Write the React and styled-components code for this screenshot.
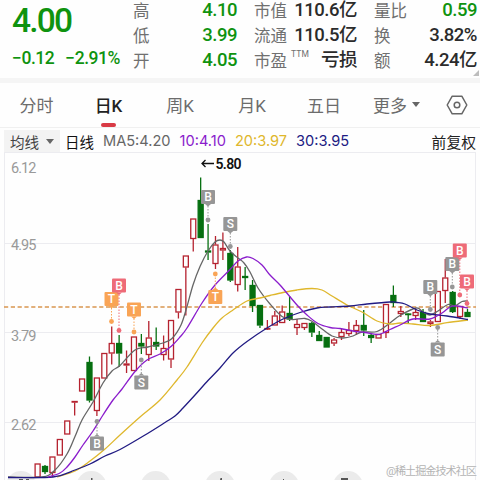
import styled, { createGlobalStyle } from "styled-components";

const GlobalStyle = createGlobalStyle`
  * {
    box-sizing: border-box;
  }
  body {
    margin: 0;
    background: #fefefe;
    overflow: hidden;
  }
`;

const GREEN = "#0f930f";
const RED = "#b5222f";
const DARK_GREEN = "#066f10";
const GREY = "#969696";
const PINK = "#ee6b78";
const ORANGE = "#f9a455";

const Page = styled.div`
  width: 480px;
  height: 480px;
  overflow: hidden;
  display: flex;
  flex-direction: column;
  font-family: Roboto, "Noto Sans CJK SC", sans-serif;
  color: #2b2b2b;
`;

const Quote = styled.div`
  height: 83px;
  flex: none;
  display: flex;
  position: relative;
  border-bottom: 5px solid #f5f5f5;
`;

const Price = styled.div`
  width: 133px;
  padding-left: 12px;
  color: ${GREEN};
`;

const PriceNow = styled.div`
  font-size: 33.5px;
  font-weight: 500;
  line-height: 39px;
  letter-spacing: -1.8px;
  padding-top: 1px;
`;

const PriceChange = styled.div`
  display: flex;
  gap: 11px;
  font-size: 17.5px;
  font-weight: 500;
  line-height: 20px;
  letter-spacing: -0.45px;
  margin-top: 8px;
  white-space: nowrap;
`;

const Stats = styled.div`
  display: grid;
  grid-template-columns: 104px 103px 103px;
  grid-auto-rows: 25px;
  column-gap: 17px;
  margin-top: -2px;
`;

const Stat = styled.div`
  display: flex;
  align-items: center;
  justify-content: space-between;
  white-space: nowrap;
`;

const StatLabel = styled.span`
  display: flex;
  font-size: 16.5px;
  line-height: 25px;
  padding-top: 1px;
  color: #707070;
`;

const Ttm = styled.span`
  font-size: 8.5px;
  line-height: 10px;
  letter-spacing: 0.2px;
  margin-left: 4px;
`;

const StatValue = styled.span`
  font-size: 18.5px;
  font-weight: 500;
  line-height: 25px;
  letter-spacing: -0.5px;
  color: ${(props) => (props.$down ? GREEN : "#2b2b2b")};
`;

const Corner = styled.div`
  position: absolute;
  right: 1px;
  bottom: 2px;
  border-left: 6px solid transparent;
  border-bottom: 6px solid #bdbdbd;
`;

const Tabs = styled.div`
  height: 45px;
  flex: none;
  display: grid;
  grid-template-columns: 73px 71px 72px 72px 72px 73px 47px;
  border-bottom: 1px solid #f0f0f0;
`;

const Tab = styled.div`
  display: flex;
  flex-direction: column;
  align-items: center;
  justify-content: space-between;
  font-size: 17px;
  padding-top: 3px;
  font-weight: ${(props) => (props.$active ? 500 : 400)};
  color: ${(props) => (props.$active ? "#222" : "#6c6c6c")};
`;

const TabText = styled.span`
  display: flex;
  align-items: center;
  gap: 5px;
  height: 37px;
`;

const Underline = styled.div`
  width: 15px;
  height: 4px;
  border-radius: 2px;
  background: #d93a45;
`;

const Caret = styled.i`
  border: 4px solid transparent;
  border-top: 5px solid #666;
  border-bottom: 0;
`;

const Legend = styled.div`
  height: 24px;
  flex: none;
  display: flex;
  align-items: center;
  padding: 2px 4px 0;
  font-family: Inter, "Noto Sans CJK SC", sans-serif;
  font-size: 14.6px;
  white-space: nowrap;
`;

const Picker = styled.div`
  width: 56px;
  height: 22px;
  padding: 0 6px;
  display: flex;
  align-items: center;
  justify-content: space-between;
  background: #f3f3f3;
  color: #444;
`;

const Period = styled.span`
  margin-left: 5px;
  color: #111;
  font-size: 14.5px;
`;

const Average = styled.span`
  margin-left: 9px;
  color: ${(props) => props.color};
`;

const Adjust = styled.span`
  margin-left: auto;
  color: #222;
  font-size: 14.8px;
`;

const Chart = styled.svg`
  display: block;
  flex: none;
  font-family: Roboto, "Noto Sans CJK SC", sans-serif;
`;

const stats = [
  { label: "高", value: "4.10", down: true },
  { label: "市值", value: "110.6亿" },
  { label: "量比", value: "0.59", down: true },
  { label: "低", value: "3.99", down: true },
  { label: "流通", value: "110.5亿" },
  { label: "换", value: "3.82%" },
  { label: "开", value: "4.05", down: true },
  { label: "市盈", value: "亏损", ttm: true },
  { label: "额", value: "4.24亿" },
];

const tabs = ["分时", "日K", "周K", "月K", "五日"];

// [up, high, body top, body bottom, low]
const candles = [
  [1, 463.5, 463.5, 477.5, 478],
  [0, 465, 466, 472, 474],
  [1, 456.5, 456.5, 473, 477],
  [1, 439, 439, 455.5, 455.5],
  [1, 420.5, 420.5, 434.5, 434.5],
  [1, 401, 401, 402.5, 415.5],
  [1, 378.5, 378.5, 391.5, 391.5],
  [0, 356.5, 362, 400.5, 402.5],
  [1, 377.5, 377.5, 411, 416],
  [1, 353, 353, 378.5, 378.5],
  [1, 326.5, 343, 353.5, 364.5],
  [0, 335, 343, 353.5, 367],
  [1, 350.5, 363.5, 365.5, 373],
  [1, 336.5, 336.5, 371, 371],
  [0, 334, 343, 346.5, 354],
  [1, 321, 337.5, 355, 361],
  [0, 327.5, 342, 346.5, 350],
  [1, 335.5, 348, 355, 360.5],
  [1, 320, 320, 359.5, 368],
  [1, 289, 289, 312.5, 318.5],
  [1, 255.5, 255.5, 267.5, 315.5],
  [1, 218.5, 218.5, 239, 251.5],
  [0, 177.5, 200, 238, 238],
  [0, 224, 250.5, 252.5, 260],
  [1, 236, 244.5, 264, 269],
  [1, 232.5, 248, 250.5, 260],
  [0, 250, 253, 280.5, 282],
  [1, 247, 266.5, 285, 291.5],
  [0, 267, 276, 278, 290],
  [0, 280, 285, 306, 312],
  [0, 305, 305, 325.5, 328],
  [1, 320, 328, 329, 330],
  [1, 311, 315.5, 325.5, 325.5],
  [1, 305.5, 311.5, 323, 323],
  [0, 296, 313, 319.5, 321],
  [1, 319, 324, 328, 335],
  [1, 323, 323, 328, 330],
  [0, 322, 323, 332.5, 337],
  [0, 331, 335, 341, 341],
  [0, 337, 337, 347.5, 347.5],
  [1, 338, 339.5, 343.5, 346],
  [1, 328.5, 332, 337, 340],
  [1, 322, 330, 334, 336],
  [1, 320, 325, 331, 335],
  [0, 310, 325, 330.5, 336],
  [0, 334, 335, 338, 343],
  [1, 334, 334, 338.5, 338.5],
  [1, 304, 304, 333, 338],
  [0, 285.5, 295, 303, 307],
  [1, 306, 311, 314, 317],
  [0, 313, 313.5, 314.5, 323],
  [1, 308, 312, 316, 320],
  [0, 309, 312, 322, 322],
  [1, 320, 321.5, 324, 327],
  [1, 291, 291, 322, 322],
  [1, 259, 277.5, 291, 303],
  [0, 291, 292, 312, 313],
  [1, 306, 306, 317, 319],
  [0, 309, 312, 317, 317],
];

const averages = [
  {
    color: "#666",
    points: [[8, 477], [42, 477], [55, 470], [67, 454], [75, 436.5], [82, 420], [93, 402], [103, 383], [112, 371], [120, 365.5], [135, 350], [148, 347], [163, 343], [172, 338.5], [181, 325], [187, 306.5], [193, 285], [200, 266.5], [208, 251], [215, 242], [220, 240], [224, 242], [230, 251], [238, 258], [244, 263], [250, 272], [258, 288], [270, 304], [282, 316.5], [292, 319.5], [305, 318.5], [313, 322], [322, 329], [332, 336], [343, 338], [353, 336], [362, 332], [377, 331.5], [390, 323], [400, 315.5], [416, 308], [423, 312], [430, 315], [438, 311], [448, 304.5], [455, 306], [462, 301.5], [468, 301]],
  },
  {
    color: "#dfb72c",
    points: [[57, 477], [75, 471], [90, 461], [105, 449], [120, 435], [140, 417], [160, 400], [177, 380], [187, 367], [202, 343], [213, 328], [222, 318], [233, 310], [247, 301], [260, 298], [270, 295.5], [283, 292.5], [297, 290], [312, 288.5], [322, 290], [332, 296], [347, 305], [362, 312], [377, 321], [390, 324], [400, 323], [413, 324], [430, 325.5], [447, 322.7], [468, 320]],
  },
  {
    color: "#211b83",
    points: [[8, 477.5], [53, 477], [75, 470], [90, 464], [105, 456], [120, 449.5], [145, 435], [165, 422.5], [175, 416], [183, 408], [195, 395], [208, 380.5], [220, 368], [233, 353], [247, 341.5], [267, 328], [283, 319], [300, 312.5], [317, 308], [330, 307], [350, 306], [367, 304], [390, 302], [397, 302.5], [405, 304], [417, 310], [430, 314], [447, 316], [468, 319.5]],
  },
  {
    color: "#8a1ccc",
    points: [[48, 477], [60, 473], [67, 467], [75, 457], [83, 445], [93, 431], [103, 415], [113, 400], [122, 389], [135, 371.5], [147, 360], [160, 354], [171, 346.5], [180, 337], [187, 328], [202, 303], [215, 285], [230, 269.5], [238, 261], [246.5, 257], [253, 258.5], [262, 265], [270, 275], [280, 285], [297, 305], [307, 315], [318, 323.5], [330, 327.5], [340, 328.5], [353, 331], [365, 332.5], [377, 334.5], [383, 333], [390, 329.5], [400, 325], [413, 319], [430, 319], [442, 313], [450, 307], [457, 306], [468, 308]],
  },
];

const markers = [
  { text: "T", color: ORANGE, x: 111.5, y: 299, dot: 321.5 },
  { text: "B", color: PINK, x: 119, y: 285.5, dot: 330.5 },
  { text: "T", color: ORANGE, x: 134, y: 309.5, dot: 332 },
  { text: "S", color: GREY, x: 141.3, y: 382.5, dot: 360 },
  { text: "B", color: GREY, x: 97, y: 443.5, dot: 421.5 },
  { text: "B", color: GREY, x: 208, y: 197, dot: 220 },
  { text: "S", color: GREY, x: 230.3, y: 224, dot: 246.5 },
  { text: "T", color: ORANGE, x: 215.3, y: 297, dot: 274 },
  { text: "B", color: GREY, x: 430.3, y: 287, dot: 309.5 },
  { text: "B", color: GREY, x: 452.3, y: 264, dot: 287 },
  { text: "B", color: PINK, x: 459.8, y: 250.5, dot: 295 },
  { text: "B", color: PINK, x: 467, y: 281.5, dot: 303.5 },
  { text: "S", color: GREY, x: 437.7, y: 349.5, dot: 327.5 },
];

const axis = [
  ["6.12", 173],
  ["4.95", 250],
  ["3.79", 340.5],
  ["2.62", 429.5],
];

const smooth = (p) => {
  let d = `M${p[0][0]} ${p[0][1]}`;
  for (let i = 0; i < p.length - 1; i++) {
    const a = p[i - 1] || p[i];
    const b = p[i];
    const c = p[i + 1];
    const e = p[i + 2] || c;
    d += `C${b[0] + (c[0] - a[0]) / 6} ${b[1] + (c[1] - a[1]) / 6} ${
      c[0] - (e[0] - b[0]) / 6
    } ${c[1] - (e[1] - b[1]) / 6} ${c[0]} ${c[1]}`;
  }
  return d;
};

const Candle = ({ x, data }) => {
  const [up, high, top, bottom, low] = data;
  const color = up ? RED : DARK_GREEN;
  return (
    <g stroke={color} strokeWidth="1.3">
      {high < top && <path d={`M${x} ${high}V${top}`} />}
      {low > bottom && <path d={`M${x} ${bottom}V${low}`} />}
      <rect
        x={x - 2.5}
        y={top + 0.5}
        width="5"
        height={Math.max(bottom - top - 1, 0.6)}
        fill={up ? "#fefefe" : color}
      />
    </g>
  );
};

const Marker = ({ text, color, x, y, dot }) => {
  const dir = dot > y ? 1 : -1;
  const edge = y + dir * 7;
  return (
    <g fill={color}>
      <path
        d={`M${x} ${edge + dir * 2}V${dot}`}
        stroke={color}
        strokeWidth="1"
        strokeDasharray="1.5 1.5"
      />
      <circle cx={x} cy={dot} r="2.4" />
      <rect x={x - 7} y={y - 7} width="14" height="14" rx="1" />
      <path d={`M${x - 3} ${edge}L${x} ${edge + dir * 2.5}L${x + 3} ${edge}Z`} />
      <text
        x={x}
        y={y + 4.2}
        fill="#fff"
        fontSize="12"
        fontWeight="500"
        textAnchor="middle"
      >
        {text}
      </text>
    </g>
  );
};

const KLine = () => (
  <Chart width="480" height="328" viewBox="0 152 480 328">
    <g stroke="#ececf0" strokeWidth="1">
      <path d="M4 152.5H476M4 243.5H476M4 332.5H476M4 422.5H476" />
      <path d="M4.5 152V480M475.5 152V480" />
    </g>
    {[21, 91.5, 155.7, 220, 284, 348].map((x) => (
      <circle key={x} cx={x} cy="486" r="15" fill="#ebebeb" />
    ))}
    <g fill="#555">
      <path d="M19 479h4v1h-4zM26 479h3v1h-3zM91 478h1.5v2h-1.5zM220.5 478l1.5 0v2h-2zM283 479h1v1h-1z" />
      <path d="M341 478h7v2h-7z" />
    </g>
    {axis.map(([label, y]) => (
      <text key={label} x="11" y={y} fontSize="14.5" fill="#999" textLength="25.5">
        {label}
      </text>
    ))}
    <path
      d="M4 307H476"
      stroke="#d99650"
      strokeWidth="1.4"
      strokeDasharray="4.2 2.6"
    />
    {candles.map((data, i) => (
      <Candle key={i} x={37.6 + i * 7.412} data={data} />
    ))}
    {averages.map(({ color, points }) => (
      <path
        key={color}
        d={smooth(points)}
        fill="none"
        stroke={color}
        strokeWidth="1.3"
      />
    ))}
    {markers.map((marker, i) => (
      <Marker key={i} {...marker} />
    ))}
    <path
      d="M214 163.5H202M205.5 160L202 163.5L205.5 167"
      fill="none"
      stroke="#111"
      strokeWidth="1.3"
    />
    <text x="215.5" y="168.5" fontSize="14" fontWeight="600" fill="#111" textLength="26">
      5.80
    </text>
    <text x="386" y="475" fontSize="11.2" fill="#b4b4b4" textLength="91">
      @稀土掘金技术社区
    </text>
  </Chart>
);

export default function App() {
  return (
    <Page>
      <GlobalStyle />
      <Quote>
        <Price>
          <PriceNow>4.00</PriceNow>
          <PriceChange>
            <span>−0.12</span>
            <span>−2.91%</span>
          </PriceChange>
        </Price>
        <Stats>
          {stats.map(({ label, value, down, ttm }) => (
            <Stat key={label}>
              <StatLabel>
                {label}
                {ttm && <Ttm>TTM</Ttm>}
              </StatLabel>
              <StatValue $down={down}>{value}</StatValue>
            </Stat>
          ))}
        </Stats>
        <Corner />
      </Quote>
      <Tabs>
        {tabs.map((tab) => (
          <Tab key={tab} $active={tab === "日K"}>
            <TabText>{tab}</TabText>
            {tab === "日K" && <Underline />}
          </Tab>
        ))}
        <Tab>
          <TabText>
            更多 <Caret />
          </TabText>
        </Tab>
        <Tab>
          <TabText>
            <svg width="22" height="20" viewBox="0 0 22 20" fill="none" stroke="#666" strokeWidth="1.5">
              <path d="M6.2 1.2H15.8L20.8 10L15.8 18.8H6.2L1.2 10Z" strokeLinejoin="round" />
              <circle cx="11" cy="10" r="2.8" />
            </svg>
          </TabText>
        </Tab>
      </Tabs>
      <Legend>
        <Picker>
          均线 <Caret />
        </Picker>
        <Period>日线</Period>
        <Average color="#666">MA5:4.20</Average>
        <Average color="#8a1ccc">10:4.10</Average>
        <Average color="#dfb72c">20:3.97</Average>
        <Average color="#211b83">30:3.95</Average>
        <Adjust>前复权</Adjust>
      </Legend>
      <KLine />
    </Page>
  );
}
